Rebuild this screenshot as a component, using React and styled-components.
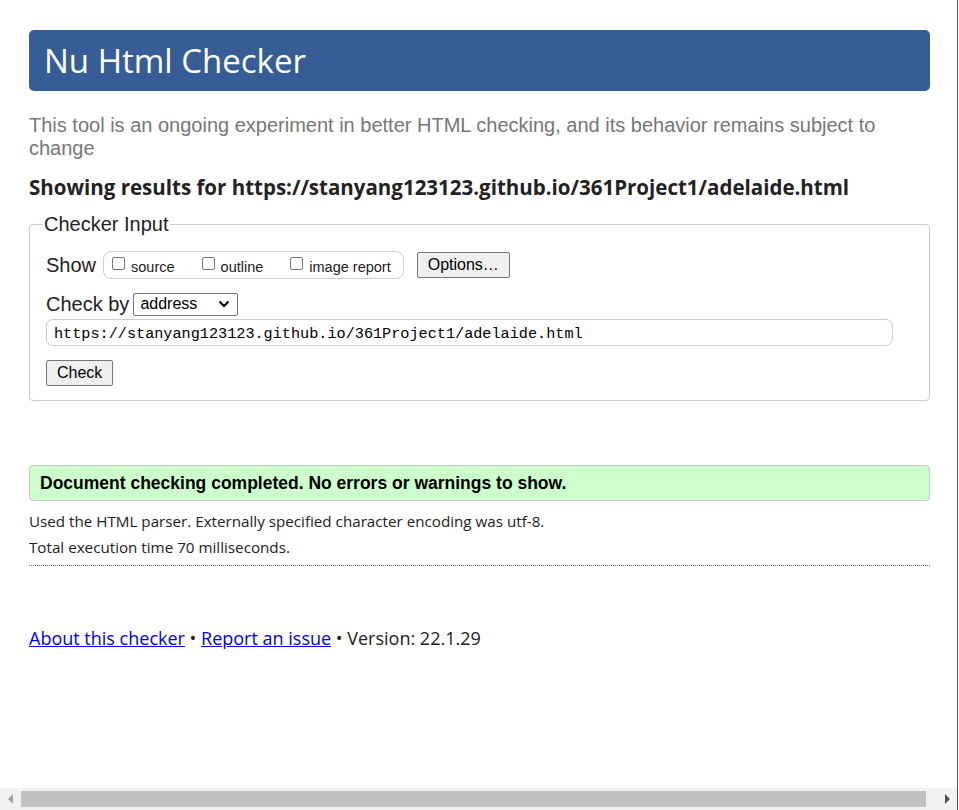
import React from "react";
import styled, { createGlobalStyle } from "styled-components";

const GlobalStyle = createGlobalStyle`
  html, body {
    margin: 0;
    padding: 0;
    background: #ffffff;
  }
  body {
    font-family: "Liberation Sans", Arial, sans-serif;
    color: #222222;
    overflow: hidden;
  }
`;

const Page = styled.div`
  width: 901px;
  padding: 30px 0 0 29px;
  height: 780px;
`;

const Banner = styled.header`
  height: 61px;
  background: #365d95;
  border-radius: 5px;
  display: flex;
  align-items: center;
  padding-left: 15px;
`;

const Title = styled.h1`
  margin: 0;
  font-family: "Open Sans", "Noto Sans", sans-serif;
  font-weight: 400;
  font-size: 33px;
  line-height: 40px;
  color: #ffffff;
`;

const Intro = styled.p`
  margin: 23px 0 0;
  font-size: 20px;
  line-height: 23px;
  color: #777777;
`;

const ResultsFor = styled.h2`
  margin: 15px 0 0;
  font-family: "Open Sans", "Noto Sans", sans-serif;
  font-weight: 700;
  font-size: 20.5px;
  line-height: 24px;
  color: #222222;
`;

const InputSet = styled.fieldset`
  margin: 14px 0 0;
  border: 1px solid #cccccc;
  border-radius: 4px;
  padding: 0 16px 14px;
`;

const Legend = styled.legend`
  margin-left: -3px;
  padding: 0 1px;
  font-size: 20px;
  line-height: 22px;
  color: #222222;
`;

const Row = styled.div`
  display: flex;
  align-items: center;
  margin-top: ${(p) => p.$top}px;
  height: ${(p) => p.$h}px;
`;

const RowLabel = styled.span`
  font-size: 20px;
  line-height: 24px;
  color: #222222;
  margin-right: ${(p) => p.$gap}px;
`;

const ShowGroup = styled.div`
  display: flex;
  align-items: center;
  height: 26px;
  border: 1px solid #cccccc;
  border-radius: 8px;
  padding: 0 12px 0 8px;
`;

const Option = styled.label`
  display: flex;
  align-items: center;
  font-size: 14.5px;
  color: #222222;
  margin-right: ${(p) => p.$gap || 0}px;
`;

const Box = styled.span`
  width: 11px;
  height: 11px;
  border: 1px solid #767676;
  border-radius: 2px;
  background: #ffffff;
  margin: -4px 6px 0 0;
`;

const OptionText = styled.span`
  margin-top: 3px;
`;

const Button = styled.button`
  font-family: "Liberation Sans", Arial, sans-serif;
  font-size: 16px;
  color: #000000;
  background: #efefef;
  border: 1px solid #767676;
  border-radius: 2px;
  height: 26px;
  padding: 0 ${(p) => p.$pad}px;
  margin-left: ${(p) => p.$left || 0}px;
`;

const Select = styled.div`
  box-sizing: border-box;
  width: 105px;
  height: 23px;
  border: 1px solid #767676;
  border-radius: 2px;
  display: flex;
  align-items: center;
  justify-content: space-between;
  padding: 0 7px 0 6px;
  font-size: 16px;
  color: #000000;
`;

const UrlField = styled.div`
  width: 847px;
  height: 27px;
  box-sizing: border-box;
  border: 1px solid #cccccc;
  border-radius: 7px;
  padding: 2px 0 0 7px;
  display: flex;
  align-items: center;
  font-family: "Liberation Mono", "DejaVu Sans Mono", monospace;
  font-size: 15.2px;
  color: #000000;
`;

const Success = styled.div`
  margin-top: 64px;
  height: 36px;
  box-sizing: border-box;
  background: #ccffcc;
  border: 1px solid #c8c8c8;
  border-radius: 4px;
  padding-left: 10px;
  display: flex;
  align-items: center;
  font-weight: 700;
  font-size: 17.5px;
  color: #000000;
`;

const Details = styled.div`
  margin-top: 7px;
`;

const Detail = styled.p`
  margin: 0;
  font-family: "Open Sans", "Noto Sans", sans-serif;
  font-size: 15.2px;
  line-height: 26px;
  color: #222222;
`;

const Rule = styled.hr`
  margin: 5px 0 0;
  border: 0;
  border-top: 1px dotted #666666;
`;

const Footer = styled.p`
  margin: 60px 0 0;
  font-family: "Open Sans", "Noto Sans", sans-serif;
  font-size: 18px;
  line-height: 24px;
  color: #222222;

  & a {
    color: #0000ee;
    text-decoration: underline;
  }
`;

const EdgeLine = styled.div`
  position: fixed;
  top: 0;
  bottom: 0;
  left: 957px;
  width: 1px;
  background: #555555;
`;

const HScroll = styled.div`
  position: fixed;
  left: 0;
  bottom: 0;
  width: 957px;
  height: 22px;
  background: #f1f1f1;
  display: flex;
  align-items: center;
`;

const Arrow = styled.span`
  width: 0;
  height: 0;
  border-top: 5px solid transparent;
  border-bottom: 5px solid transparent;
  ${(p) =>
    p.$dir === "left"
      ? `border-right: 5px solid #a3a3a3; margin: 0 8px 0 8px;`
      : `border-left: 5px solid #505050; margin: 0 0 0 19px;`}
`;

const Thumb = styled.div`
  width: 905px;
  height: 16px;
  background: #c1c1c1;
`;

function Chevron() {
  return (
    <svg width="12" height="8" viewBox="0 0 12 8">
      <path d="M1.5 1.5 L6 6 L10.5 1.5" fill="none" stroke="#000" strokeWidth="2" />
    </svg>
  );
}

export default function App() {
  return (
    <>
      <GlobalStyle />
      <Page>
        <Banner>
          <Title>Nu Html Checker</Title>
        </Banner>
        <Intro>
          This tool is an ongoing experiment in better HTML checking, and its behavior remains subject to
          change
        </Intro>
        <ResultsFor>Showing results for https://stanyang123123.github.io/361Project1/adelaide.html</ResultsFor>
        <InputSet>
          <Legend>Checker Input</Legend>
          <Row $top={16} $h={28}>
            <RowLabel $gap={7}>Show</RowLabel>
            <ShowGroup>
              <Option $gap={27}>
                <Box />
                <OptionText>source</OptionText>
              </Option>
              <Option $gap={27}>
                <Box />
                <OptionText>outline</OptionText>
              </Option>
              <Option>
                <Box />
                <OptionText>image report</OptionText>
              </Option>
            </ShowGroup>
            <Button $pad={10} $left={13}>Options…</Button>
          </Row>
          <Row $top={13} $h={24}>
            <RowLabel $gap={4}>Check by</RowLabel>
            <Select>
              <span>address</span>
              <Chevron />
            </Select>
          </Row>
          <Row $top={3} $h={27}>
            <UrlField>https://stanyang123123.github.io/361Project1/adelaide.html</UrlField>
          </Row>
          <Row $top={14} $h={26}>
            <Button $pad={10}>Check</Button>
          </Row>
        </InputSet>
        <Success>Document checking completed. No errors or warnings to show.</Success>
        <Details>
          <Detail>Used the HTML parser. Externally specified character encoding was utf-8.</Detail>
          <Detail>Total execution time 70 milliseconds.</Detail>
        </Details>
        <Rule />
        <Footer>
          <a href="#about">About this checker</a> • <a href="#issue">Report an issue</a> • Version: 22.1.29
        </Footer>
      </Page>
      <EdgeLine />
      <HScroll>
        <Arrow $dir="left" />
        <Thumb />
        <Arrow $dir="right" />
      </HScroll>
    </>
  );
}
